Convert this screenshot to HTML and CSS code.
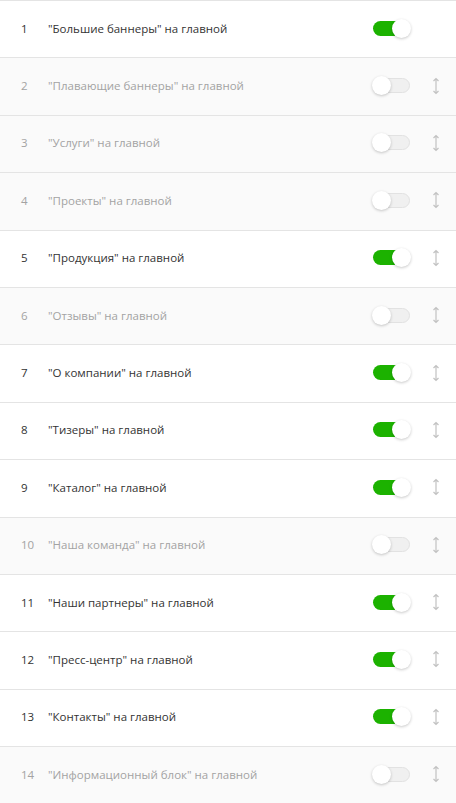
FILE: index.html
```html
<!DOCTYPE html>
<html lang="ru">
<head>
<meta charset="utf-8">
<link rel="stylesheet" href="styles.css">
</head>
<body>
<div class="list">
  <div class="row on"><span class="num">1</span><span class="label">"Большие баннеры" на главной</span><span class="toggle"><span class="knob"></span></span><span class="drag none"></span></div>
  <div class="row off"><span class="num">2</span><span class="label">"Плавающие баннеры" на главной</span><span class="toggle"><span class="knob"></span></span><span class="drag"><svg width="8" height="18" viewBox="0 0 8 18"><path d="M4 1.5V16.5M1.5 4L4 1.5L6.5 4M1.5 14L4 16.5L6.5 14" fill="none" stroke="currentColor" stroke-width="1.2"/></svg></span></div>
  <div class="row off"><span class="num">3</span><span class="label">"Услуги" на главной</span><span class="toggle"><span class="knob"></span></span><span class="drag"><svg width="8" height="18" viewBox="0 0 8 18"><path d="M4 1.5V16.5M1.5 4L4 1.5L6.5 4M1.5 14L4 16.5L6.5 14" fill="none" stroke="currentColor" stroke-width="1.2"/></svg></span></div>
  <div class="row off"><span class="num">4</span><span class="label">"Проекты" на главной</span><span class="toggle"><span class="knob"></span></span><span class="drag"><svg width="8" height="18" viewBox="0 0 8 18"><path d="M4 1.5V16.5M1.5 4L4 1.5L6.5 4M1.5 14L4 16.5L6.5 14" fill="none" stroke="currentColor" stroke-width="1.2"/></svg></span></div>
  <div class="row on"><span class="num">5</span><span class="label">"Продукция" на главной</span><span class="toggle"><span class="knob"></span></span><span class="drag"><svg width="8" height="18" viewBox="0 0 8 18"><path d="M4 1.5V16.5M1.5 4L4 1.5L6.5 4M1.5 14L4 16.5L6.5 14" fill="none" stroke="currentColor" stroke-width="1.2"/></svg></span></div>
  <div class="row off"><span class="num">6</span><span class="label">"Отзывы" на главной</span><span class="toggle"><span class="knob"></span></span><span class="drag"><svg width="8" height="18" viewBox="0 0 8 18"><path d="M4 1.5V16.5M1.5 4L4 1.5L6.5 4M1.5 14L4 16.5L6.5 14" fill="none" stroke="currentColor" stroke-width="1.2"/></svg></span></div>
  <div class="row on"><span class="num">7</span><span class="label">"О компании" на главной</span><span class="toggle"><span class="knob"></span></span><span class="drag"><svg width="8" height="18" viewBox="0 0 8 18"><path d="M4 1.5V16.5M1.5 4L4 1.5L6.5 4M1.5 14L4 16.5L6.5 14" fill="none" stroke="currentColor" stroke-width="1.2"/></svg></span></div>
  <div class="row on"><span class="num">8</span><span class="label">"Тизеры" на главной</span><span class="toggle"><span class="knob"></span></span><span class="drag"><svg width="8" height="18" viewBox="0 0 8 18"><path d="M4 1.5V16.5M1.5 4L4 1.5L6.5 4M1.5 14L4 16.5L6.5 14" fill="none" stroke="currentColor" stroke-width="1.2"/></svg></span></div>
  <div class="row on"><span class="num">9</span><span class="label">"Каталог" на главной</span><span class="toggle"><span class="knob"></span></span><span class="drag"><svg width="8" height="18" viewBox="0 0 8 18"><path d="M4 1.5V16.5M1.5 4L4 1.5L6.5 4M1.5 14L4 16.5L6.5 14" fill="none" stroke="currentColor" stroke-width="1.2"/></svg></span></div>
  <div class="row off"><span class="num">10</span><span class="label">"Наша команда" на главной</span><span class="toggle"><span class="knob"></span></span><span class="drag"><svg width="8" height="18" viewBox="0 0 8 18"><path d="M4 1.5V16.5M1.5 4L4 1.5L6.5 4M1.5 14L4 16.5L6.5 14" fill="none" stroke="currentColor" stroke-width="1.2"/></svg></span></div>
  <div class="row on"><span class="num">11</span><span class="label">"Наши партнеры" на главной</span><span class="toggle"><span class="knob"></span></span><span class="drag"><svg width="8" height="18" viewBox="0 0 8 18"><path d="M4 1.5V16.5M1.5 4L4 1.5L6.5 4M1.5 14L4 16.5L6.5 14" fill="none" stroke="currentColor" stroke-width="1.2"/></svg></span></div>
  <div class="row on"><span class="num">12</span><span class="label">"Пресс-центр" на главной</span><span class="toggle"><span class="knob"></span></span><span class="drag"><svg width="8" height="18" viewBox="0 0 8 18"><path d="M4 1.5V16.5M1.5 4L4 1.5L6.5 4M1.5 14L4 16.5L6.5 14" fill="none" stroke="currentColor" stroke-width="1.2"/></svg></span></div>
  <div class="row on"><span class="num">13</span><span class="label">"Контакты" на главной</span><span class="toggle"><span class="knob"></span></span><span class="drag"><svg width="8" height="18" viewBox="0 0 8 18"><path d="M4 1.5V16.5M1.5 4L4 1.5L6.5 4M1.5 14L4 16.5L6.5 14" fill="none" stroke="currentColor" stroke-width="1.2"/></svg></span></div>
  <div class="row off"><span class="num">14</span><span class="label">"Информационный блок" на главной</span><span class="toggle"><span class="knob"></span></span><span class="drag"><svg width="8" height="18" viewBox="0 0 8 18"><path d="M4 1.5V16.5M1.5 4L4 1.5L6.5 4M1.5 14L4 16.5L6.5 14" fill="none" stroke="currentColor" stroke-width="1.2"/></svg></span></div>
</div>
</body>
</html>
```
FILE: styles.css
```css
html, body {
  margin: 0;
  padding: 0;
  background: #fafafa;
}
body {
  font-family: "Open Sans", "Liberation Sans", sans-serif;
  font-size: 11.5px;
}
.list {
  display: flex;
  flex-direction: column;
}
.row {
  display: flex;
  align-items: center;
  height: 57.4px;
  box-sizing: border-box;
  border-top: 1px solid #e4e4e4;
  padding-left: 21px;
  padding-bottom: 2px;
}
.row.on {
  background: #ffffff;
  color: #333333;
}
.row.off {
  background: #fafafa;
  color: #a3a3a3;
}
.num {
  width: 27px;
  flex: none;
}
.label {
  flex: 1;
  white-space: nowrap;
}
.toggle {
  position: relative;
  width: 37px;
  height: 15px;
  box-sizing: border-box;
  border-radius: 8px;
  flex: none;
  margin-right: 22px;
}
.on .toggle {
  background: #1cb200;
}
.off .toggle {
  background: #f0f0f0;
  border: 1px solid #e2e2e2;
}
.knob {
  position: absolute;
  top: 50%;
  width: 19px;
  height: 19px;
  margin-top: -9.5px;
  border-radius: 50%;
  background: #fff;
  box-shadow: 0 1px 3px rgba(0,0,0,0.22);
}
.on .knob { right: -1px; }
.off .knob { left: -2px; }
.drag {
  width: 8px;
  height: 18px;
  flex: none;
  margin-right: 16px;
  color: #c2c2c2;
  display: flex;
}
```
